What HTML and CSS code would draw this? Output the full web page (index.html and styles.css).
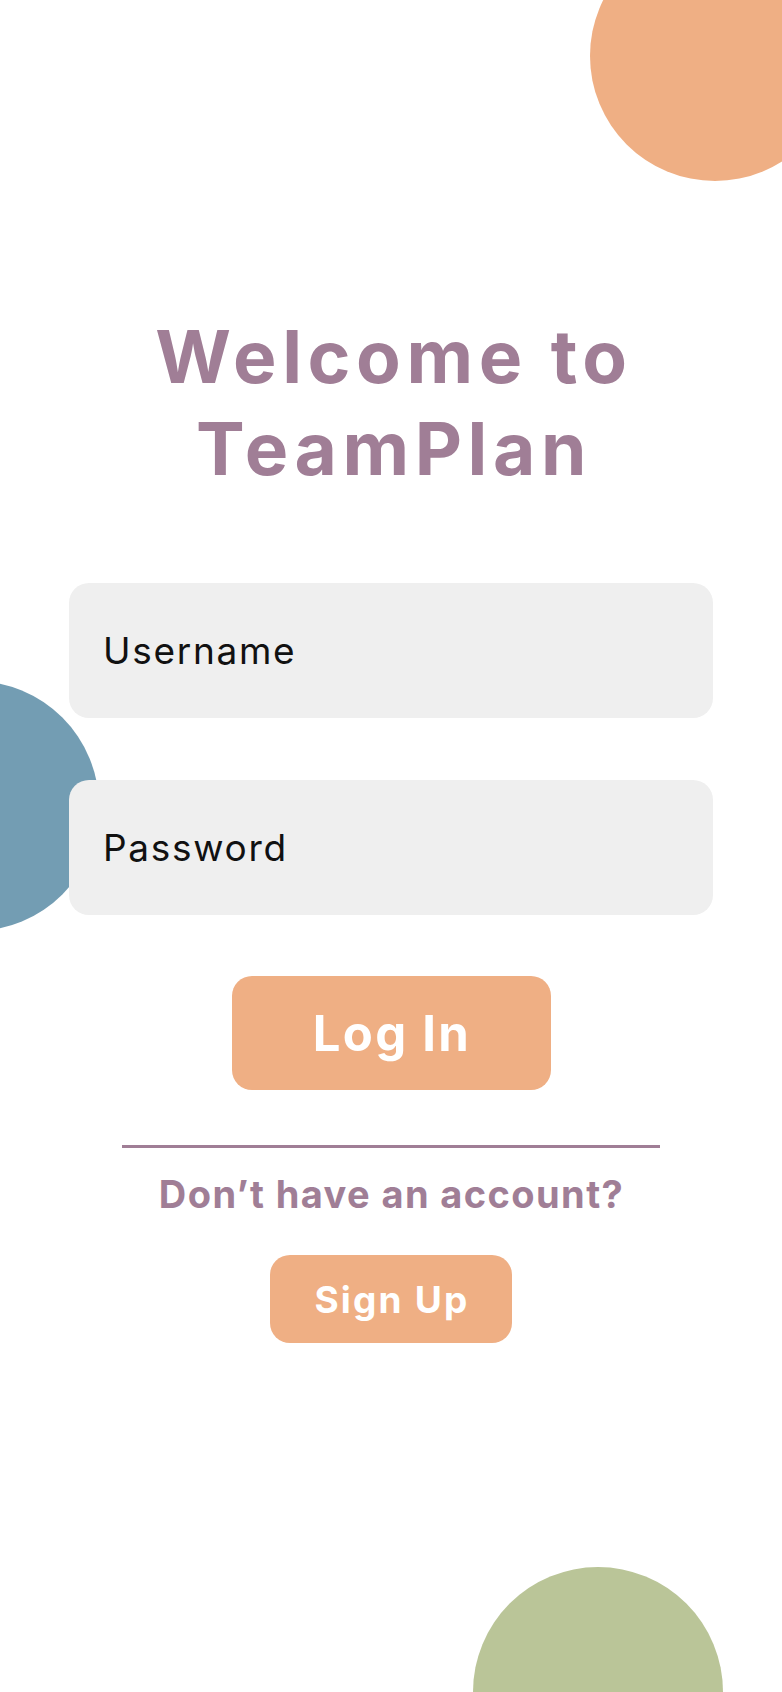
FILE: index.html
```html
<!DOCTYPE html>
<html lang="en">
<head>
<meta charset="utf-8">
<title>TeamPlan – Log In</title>
<link rel="stylesheet" href="styles.css">
</head>
<body>
<div class="screen">
  <div class="blob blob-orange"></div>
  <div class="blob blob-blue"></div>
  <div class="blob blob-green"></div>

  <main class="content">
    <h1 class="title">Welcome to<br>TeamPlan</h1>

    <form class="form">
      <input class="field" type="text" placeholder="Username">
      <input class="field" type="password" placeholder="Password">
      <button class="btn btn-login" type="button">Log In</button>
    </form>

    <div class="divider"></div>
    <p class="prompt">Don’t have an account?</p>
    <button class="btn btn-signup" type="button">Sign Up</button>
  </main>
</div>
</body>
</html>
```

FILE: styles.css
```css
* { box-sizing: border-box; }

html, body {
  margin: 0;
  padding: 0;
  background: #ffffff;
}

.screen {
  position: relative;
  width: 100%;
  height: 100vh;
  overflow: hidden;
  font-family: "Inter", "Open Sans", "Liberation Sans", sans-serif;
}

.blob {
  position: absolute;
  width: 250px;
  height: 250px;
  border-radius: 50%;
  z-index: 0;
}
.blob-orange { background: #efaf84; left: 590px; top: -69px; }
.blob-blue   { background: #739db3; left: -151px; top: 681px; }
.blob-green  { background: #bac598; left: 473px; top: 1567px; }

.content {
  position: relative;
  z-index: 1;
  display: flex;
  flex-direction: column;
  align-items: center;
  padding-top: 311px;
}

.title {
  margin: 0;
  padding-left: 6px;
  color: #a07e96;
  font-size: 73px;
  line-height: 92px;
  font-weight: 700;
  text-align: center;
  letter-spacing: 5.6px;
}

.form {
  display: flex;
  flex-direction: column;
  align-items: center;
  margin-top: 88px;
  gap: 62px;
  width: 100%;
}

.field {
  display: block;
  width: 644px;
  height: 135px;
  border: 0;
  border-radius: 20px;
  background: #efefef;
  padding: 0 0 0 34px;
  font-family: inherit;
  font-size: 37px;
  font-weight: 400;
  letter-spacing: 1.7px;
  color: #000;
  outline: none;
}
.field::placeholder { color: #111; opacity: 1; }

.form .btn-login { margin-top: -1px; }

.btn {
  border: 0;
  border-radius: 20px;
  background: #efaf84;
  color: #ffffff;
  font-family: inherit;
  font-weight: 700;
  display: flex;
  align-items: center;
  justify-content: center;
  padding: 0;
  cursor: pointer;
}

.btn-login {
  width: 319px;
  height: 114px;
  font-size: 49px;
  letter-spacing: 2.3px;
  padding-left: 2px;
}

.divider {
  width: 538px;
  height: 3px;
  background: #a07e96;
  margin-top: 55px;
}

.prompt {
  margin: 22px 0 0;
  padding-left: 1px;
  color: #a07e96;
  font-size: 38px;
  line-height: 48px;
  font-weight: 700;
  letter-spacing: 1.4px;
}

.btn-signup {
  width: 242px;
  height: 88px;
  font-size: 37px;
  letter-spacing: 2.2px;
  padding-left: 2px;
  margin-top: 37px;
}
```
